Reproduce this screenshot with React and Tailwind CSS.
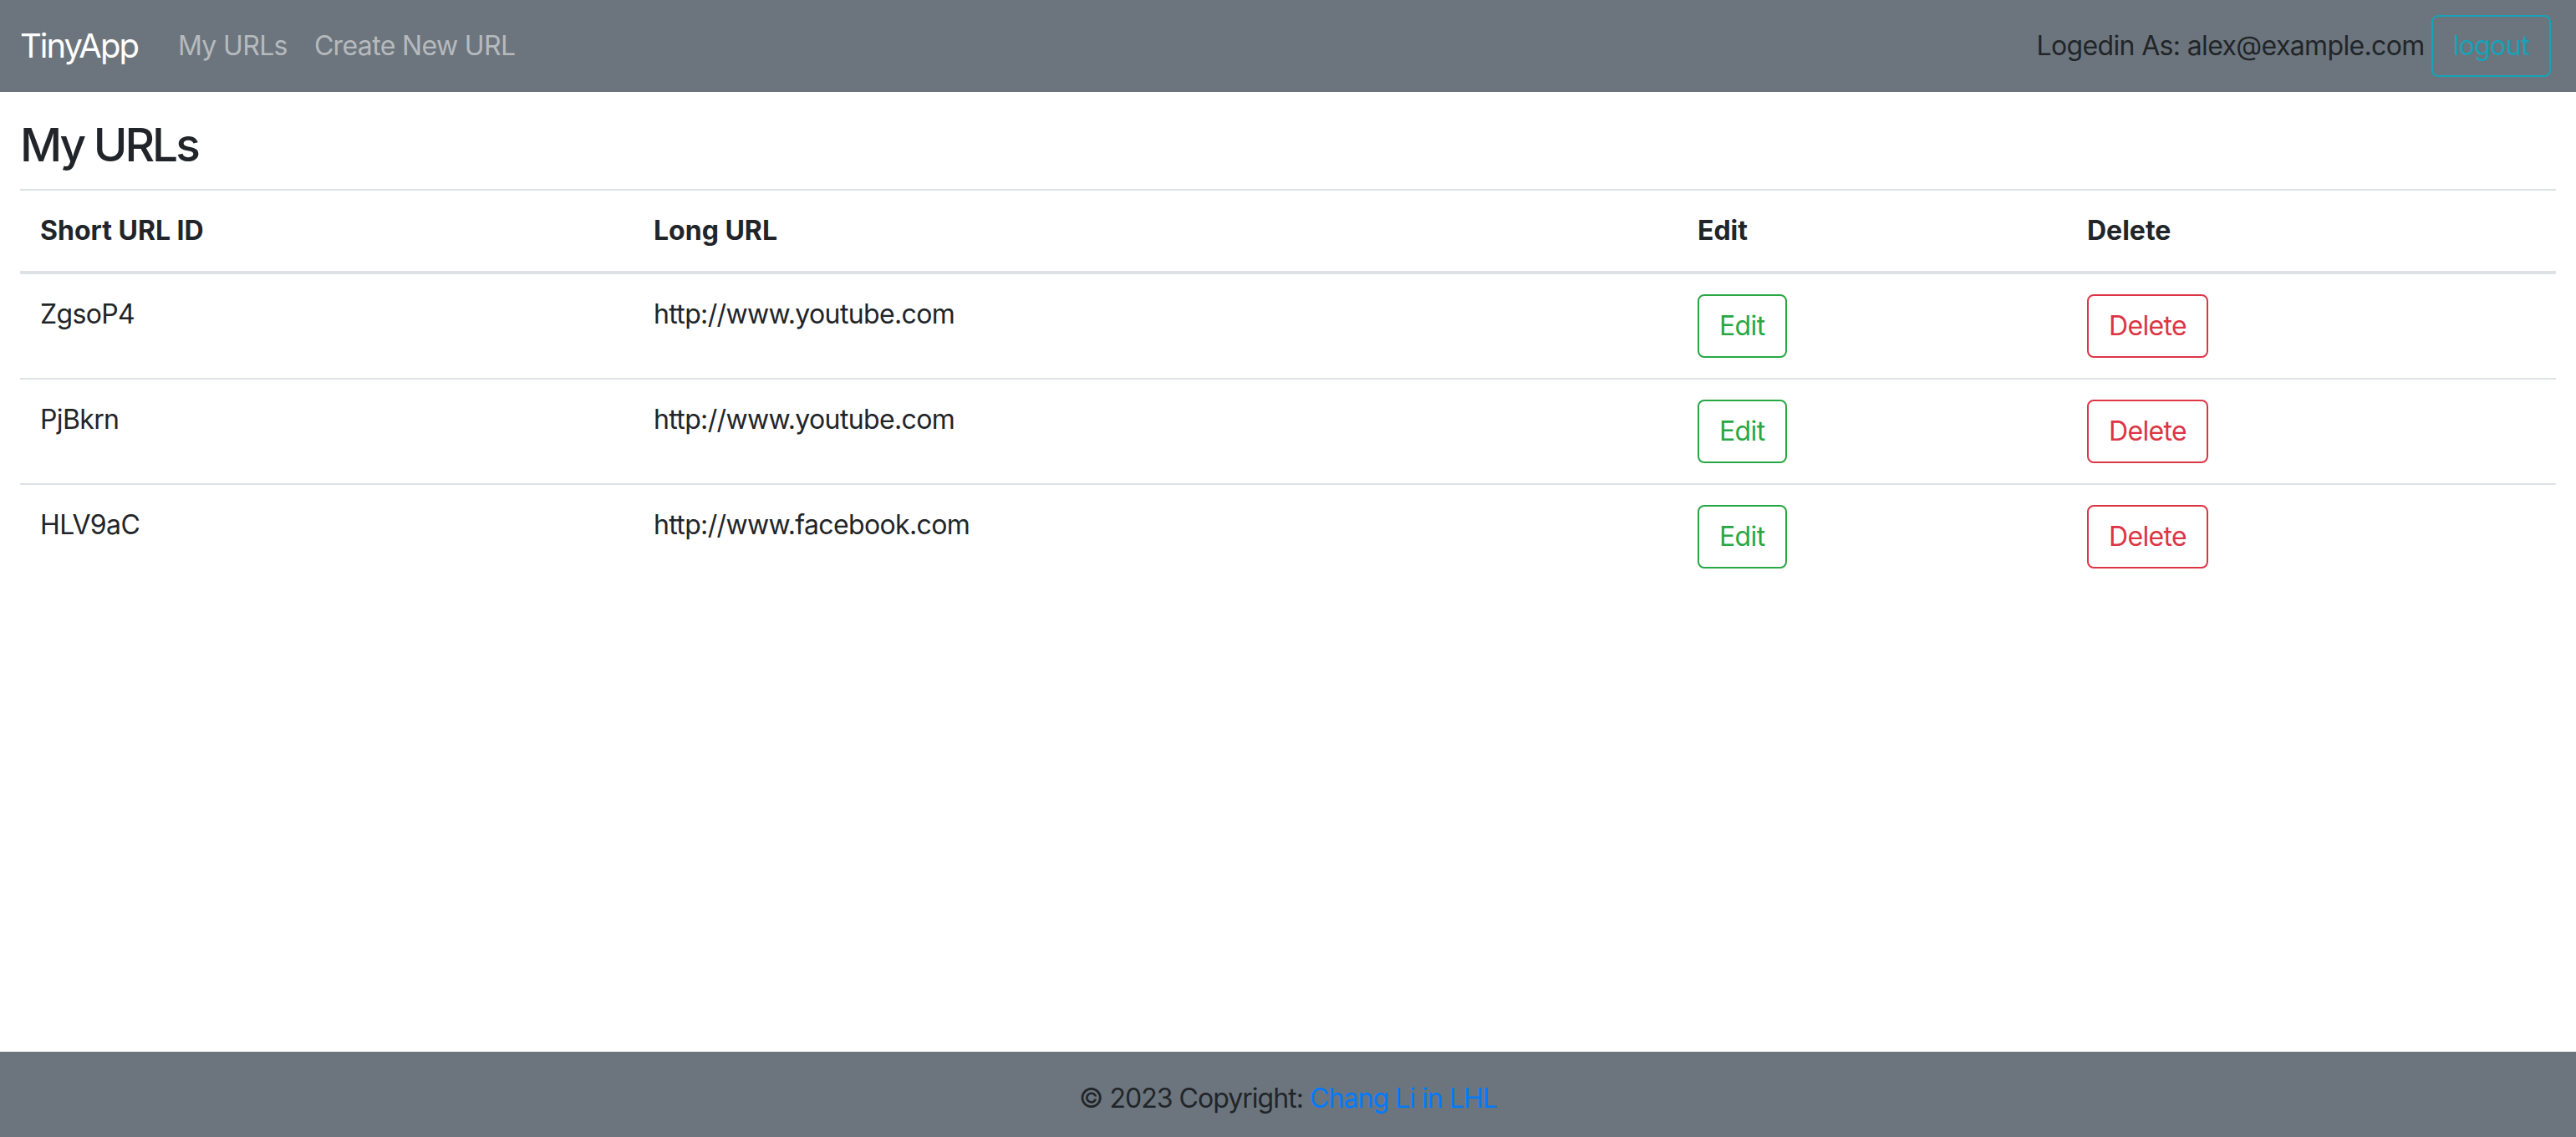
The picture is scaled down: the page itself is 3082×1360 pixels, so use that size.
import React from 'react';

const urls = [
    { id: 'ZgsoP4', longURL: 'http://www.youtube.com' },
    { id: 'PjBkrn', longURL: 'http://www.youtube.com' },
    { id: 'HLV9aC', longURL: 'http://www.facebook.com' },
];

const Navbar = () => (
    <nav className="h-[110px] bg-[#6c757d] flex items-center justify-between pl-[24px] pr-[30px]">
        <div className="flex items-center">
            <a href="#" className="text-[40px] leading-[60px] tracking-[-0.05em] text-white mr-[32px]">TinyApp</a>
            <a href="#" className="text-[32px] leading-[48px] px-[16px] text-[#b6babe]">My URLs</a>
            <a href="#" className="text-[32px] leading-[48px] px-[16px] text-[#b6babe]">Create New URL</a>
        </div>
        <div className="flex items-center gap-[8px]">
            <span className="text-[32px] leading-[48px] text-[#212529]">Logedin As: alex@example.com</span>
            <button className="h-[74px] px-[24px] border-2 border-[#17a2b8] rounded-[8px] text-[32px] leading-[48px] text-[#17a2b8]">
                logout
            </button>
        </div>
    </nav>
);

const Row = ({ url }) => (
    <tr className="border-t-2 border-[#dee2e6] align-top">
        <td className="p-[24px] text-[32px] leading-[48px]">{url.id}</td>
        <td className="p-[24px] text-[32px] leading-[48px]">{url.longURL}</td>
        <td className="p-[24px]">
            <button className="h-[76px] px-[24px] border-2 border-[#28a745] rounded-[8px] text-[32px] leading-[48px] text-[#28a745]">
                Edit
            </button>
        </td>
        <td className="p-[24px]">
            <button className="h-[76px] px-[24px] border-2 border-[#dc3545] rounded-[8px] text-[32px] leading-[48px] text-[#dc3545]">
                Delete
            </button>
        </td>
    </tr>
);

export default function App() {
    return (
        <div className="min-h-screen flex flex-col bg-white text-[#212529] tracking-[-0.04em] font-['Inter','Liberation_Sans',sans-serif]">
            <Navbar />
            <main className="flex-1 px-[24px] pt-[30px]">
                <h3 className="text-[55px] leading-[66px] font-medium tracking-[-0.055em] mb-[20px]">My URLs</h3>
                <table className="w-full table-fixed border-collapse text-left">
                    <colgroup>
                        <col className="w-[734px]" />
                        <col className="w-[1249px]" />
                        <col className="w-[466px]" />
                        <col className="w-[585px]" />
                    </colgroup>
                    <thead>
                        <tr className="border-t-2 border-b-4 border-[#dee2e6]">
                            <th className="p-[24px] text-[32px] leading-[48px] font-bold tracking-normal">Short URL ID</th>
                            <th className="p-[24px] text-[32px] leading-[48px] font-bold tracking-normal">Long URL</th>
                            <th className="p-[24px] text-[32px] leading-[48px] font-bold tracking-normal">Edit</th>
                            <th className="p-[24px] text-[32px] leading-[48px] font-bold tracking-normal">Delete</th>
                        </tr>
                    </thead>
                    <tbody>
                        {urls.map((url) => (
                            <Row key={url.id} url={url} />
                        ))}
                    </tbody>
                </table>
            </main>
            <footer className="h-[102px] pt-[10px] bg-[#6c757d] flex items-center justify-center text-[32px] leading-[48px] tracking-[-0.03em] text-[#212529]">
                <span>
                    © 2023 Copyright: <a href="#" className="text-[#007bff]">Chang Li in LHL</a>
                </span>
            </footer>
        </div>
    );
}
